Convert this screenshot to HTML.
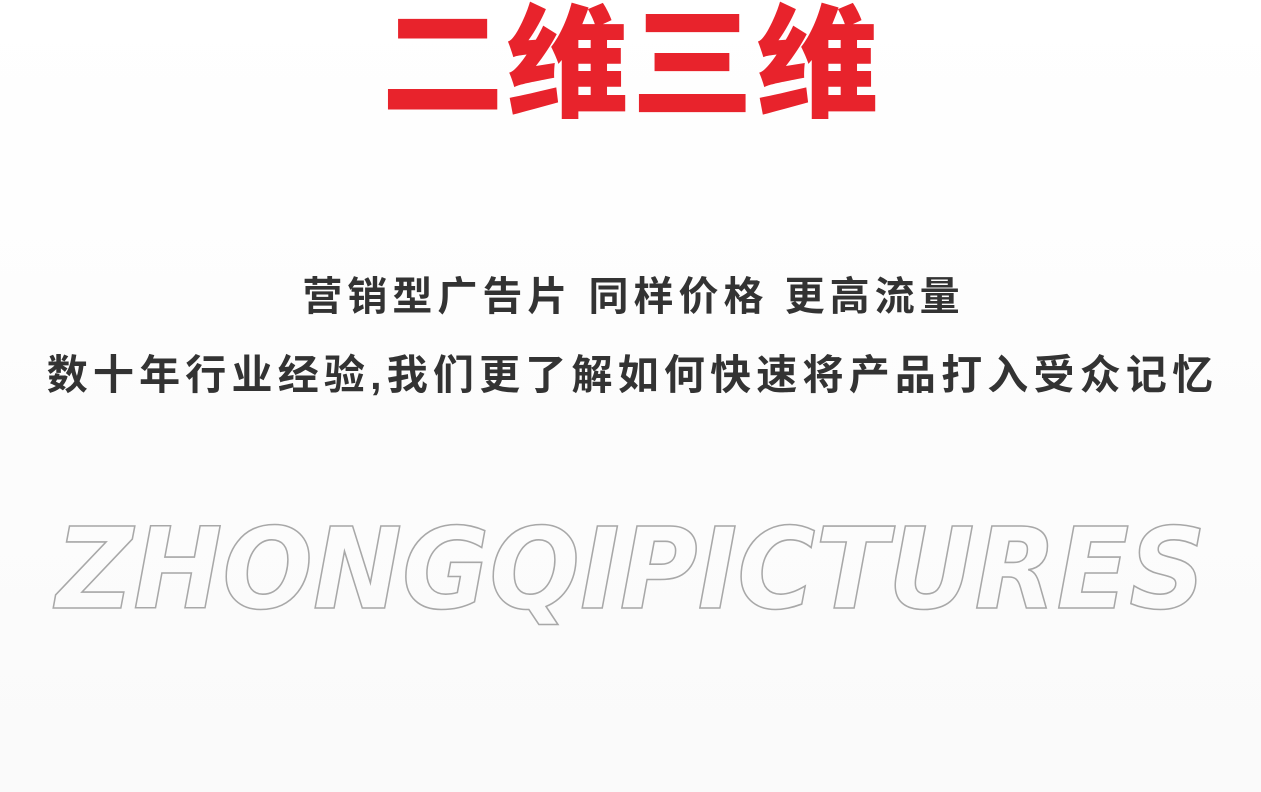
<!DOCTYPE html>
<html><head><meta charset="utf-8"><style>
html,body{margin:0;padding:0}
body{width:1261px;height:792px;overflow:hidden;background:linear-gradient(#ffffff,#fafafa);position:relative;font-family:"Liberation Sans","Noto Sans CJK SC",sans-serif}
.t{position:absolute;left:0;width:1261px;text-align:center;white-space:nowrap}
#h{top:-5px;font-size:122px;font-weight:900;color:#e8232c;letter-spacing:3px;line-height:140px;left:1px}
#a{top:272px;font-size:40px;font-weight:700;color:#333;line-height:50px;letter-spacing:5px;left:3px}
#b{top:350px;font-size:41px;font-weight:700;color:#333;line-height:50px;letter-spacing:5.2px;left:2px}
svg{position:absolute;left:0;top:0}
</style></head><body>
<div class="t" id="h">二维三维</div>
<div class="t" id="a">营销型广告片 同样价格 更高流量</div>
<div class="t" id="b">数十年行业经验,我们更了解如何快速将产品打入受众记忆</div>
<svg width="1261" height="792"><text x="56" y="608" font-family="DejaVu Sans" font-weight="bold" font-style="italic" font-size="112" fill="none" stroke="#a8a8a8" stroke-width="1.6" textLength="1150" lengthAdjust="spacingAndGlyphs">ZHONGQIPICTURES</text></svg>
</body></html>
